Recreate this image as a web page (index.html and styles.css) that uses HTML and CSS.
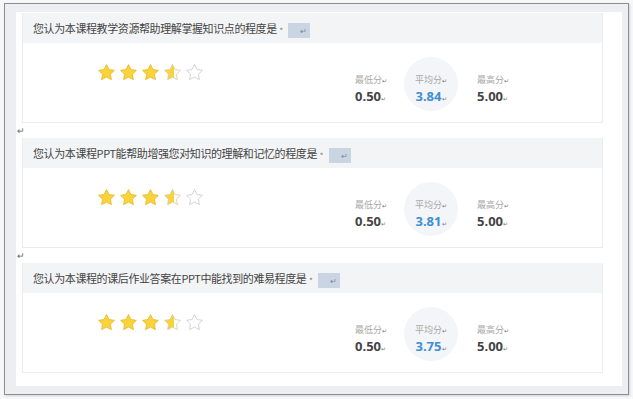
FILE: index.html
```html
<!DOCTYPE html>
<html lang="zh-CN">
<head>
  <meta charset="UTF-8" />
  <title>课程评价</title>
  <link rel="stylesheet" href="styles.css">
</head>
<body>
  <svg class="defs" width="0" height="0">
    <defs>
      <linearGradient id="half">
        <stop offset="58%" stop-color="#f8d43a" />
        <stop offset="58%" stop-color="#ffffff" />
      </linearGradient>
      <polygon id="star" points="12,2 15.09,8.26 22,9.27 17,14.14 18.18,21.02 12,17.77 5.82,21.02 7,14.14 2,9.27 8.91,8.26" />
    </defs>
  </svg>

  <div class="frame">
    <div class="page">

      <div class="question">
        <div class="q-head">您认为本课程教学资源帮助理解掌握知识点的程度是<span class="dot">·</span><span class="mark">↵</span></div>
        <div class="q-body">
          <div class="stars">
            <svg viewBox="0 0 24 24" class="star full"><use href="#star" /></svg>
            <svg viewBox="0 0 24 24" class="star full"><use href="#star" /></svg>
            <svg viewBox="0 0 24 24" class="star full"><use href="#star" /></svg>
            <svg viewBox="0 0 24 24" class="star half"><use href="#star" /></svg>
            <svg viewBox="0 0 24 24" class="star empty"><use href="#star" /></svg>
          </div>
          <div class="stats">
            <div class="stat"><div class="label">最低分<i>↵</i></div><div class="value">0.50<i>↵</i></div></div>
            <div class="stat avg"><div class="label">平均分<i>↵</i></div><div class="value">3.84<i>↵</i></div></div>
            <div class="stat max"><div class="label">最高分<i>↵</i></div><div class="value">5.00<i>↵</i></div></div>
          </div>
        </div>
      </div>
      <div class="para">↵</div>

      <div class="question">
        <div class="q-head">您认为本课程PPT能帮助增强您对知识的理解和记忆的程度是<span class="dot">·</span><span class="mark">↵</span></div>
        <div class="q-body">
          <div class="stars">
            <svg viewBox="0 0 24 24" class="star full"><use href="#star" /></svg>
            <svg viewBox="0 0 24 24" class="star full"><use href="#star" /></svg>
            <svg viewBox="0 0 24 24" class="star full"><use href="#star" /></svg>
            <svg viewBox="0 0 24 24" class="star half"><use href="#star" /></svg>
            <svg viewBox="0 0 24 24" class="star empty"><use href="#star" /></svg>
          </div>
          <div class="stats">
            <div class="stat"><div class="label">最低分<i>↵</i></div><div class="value">0.50<i>↵</i></div></div>
            <div class="stat avg"><div class="label">平均分<i>↵</i></div><div class="value">3.81<i>↵</i></div></div>
            <div class="stat max"><div class="label">最高分<i>↵</i></div><div class="value">5.00<i>↵</i></div></div>
          </div>
        </div>
      </div>
      <div class="para">↵</div>

      <div class="question">
        <div class="q-head">您认为本课程的课后作业答案在PPT中能找到的难易程度是<span class="dot">·</span><span class="mark">↵</span></div>
        <div class="q-body">
          <div class="stars">
            <svg viewBox="0 0 24 24" class="star full"><use href="#star" /></svg>
            <svg viewBox="0 0 24 24" class="star full"><use href="#star" /></svg>
            <svg viewBox="0 0 24 24" class="star full"><use href="#star" /></svg>
            <svg viewBox="0 0 24 24" class="star half"><use href="#star" /></svg>
            <svg viewBox="0 0 24 24" class="star empty"><use href="#star" /></svg>
          </div>
          <div class="stats">
            <div class="stat"><div class="label">最低分<i>↵</i></div><div class="value">0.50<i>↵</i></div></div>
            <div class="stat avg"><div class="label">平均分<i>↵</i></div><div class="value">3.75<i>↵</i></div></div>
            <div class="stat max"><div class="label">最高分<i>↵</i></div><div class="value">5.00<i>↵</i></div></div>
          </div>
        </div>
      </div>

    </div>
  </div>
</body>
</html>
```

FILE: styles.css
```css
* {
  margin: 0;
  padding: 0;
  box-sizing: border-box;
}
body {
  font-family: "Noto Sans CJK SC", "Noto Sans", sans-serif;
  background-color: #f6f7f9;
  width: 633px;
  height: 399px;
  overflow: hidden;
  color: #333;
}
.defs {
  position: absolute;
}
.frame {
  margin: 3px 4px 4px 4px;
  height: 392px;
  border: 1px solid #8e8e8e;
  background: #eceef2;
  padding: 8px 6px 8px 11px;
  box-shadow: 1px 1px 2px rgba(0, 0, 0, 0.15);
}
.page {
  background: #ffffff;
  height: 100%;
  padding: 1px 19px 0 6px;
}
.question {
  border: 1px solid #ececec;
  border-top: none;
}
.q-head {
  height: 30px;
  background: #f3f4f6;
  font-size: 11px;
  letter-spacing: -0.4px;
  line-height: 30px;
  padding-left: 10px;
  color: #444;
  white-space: nowrap;
}
.q-head .dot {
  color: #999;
  margin: 0 2px 0 -1px;
}
.q-head .mark {
  display: inline-block;
  width: 22px;
  height: 15px;
  line-height: 15px;
  vertical-align: middle;
  background: #c9d5e2;
  color: #7a8796;
  font-size: 8px;
  text-align: right;
  padding-right: 3px;
  letter-spacing: 0;
}
.q-body {
  height: 79px;
  display: flex;
  align-items: flex-start;
}
.stars {
  display: flex;
  gap: 3px;
  margin-left: 74px;
  margin-top: 20px;
}
.star {
  width: 19px;
  height: 19px;
}
.star.full {
  fill: #f8d43a;
  stroke: #e7b625;
  stroke-width: 1;
}
.star.half {
  fill: url(#half);
  stroke: #d9c79a;
  stroke-width: 1;
}
.star.empty {
  fill: #ffffff;
  stroke: #c8c8c8;
  stroke-width: 1;
}
.stats {
  display: flex;
  align-items: flex-start;
  margin-left: 151px;
  padding-top: 14px;
}
.stat {
  width: 49px;
  margin-top: 17px;
}
.stat.avg {
  width: 54px;
  height: 54px;
  margin-top: 0;
  padding-top: 17px;
  border-radius: 50%;
  background: #f3f5f8;
  text-align: center;
}
.stat.max {
  margin-left: 19px;
}
.label {
  font-size: 9px;
  line-height: 12px;
  color: #a8a8a8;
}
.value {
  font-family: "Open Sans", "Noto Sans", sans-serif;
  font-size: 13px;
  font-weight: 700;
  line-height: 16px;
  margin-top: 1px;
  color: #444;
}
.avg .value {
  color: #3f8fd2;
}
.stat i {
  font-style: normal;
  font-size: 6px;
  font-weight: 400;
  color: #777;
}
.para {
  height: 15px;
  line-height: 15px;
  font-size: 9px;
  color: #666;
  margin-left: -5px;
}
```
